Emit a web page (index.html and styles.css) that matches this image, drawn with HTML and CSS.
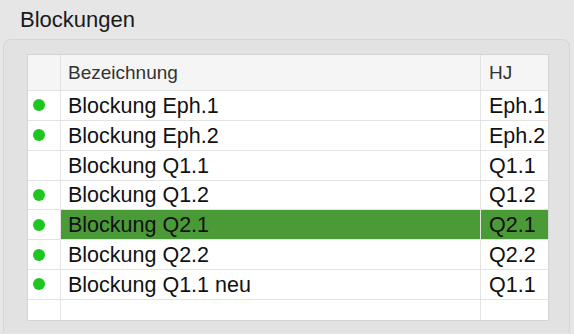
FILE: index.html
```html
<!DOCTYPE html>
<html>
<head>
<meta charset="utf-8">
<link rel="stylesheet" href="styles.css">
</head>
<body>
<div class="title">Blockungen</div>
<div class="panel">
  <div class="grid">
    <div class="cell head dotcol"></div>
    <div class="cell head name">Bezeichnung</div>
    <div class="cell head hj">HJ</div>

    <div class="cell dotcol"><span class="dot"></span></div>
    <div class="cell name">Blockung Eph.1</div>
    <div class="cell hj">Eph.1</div>

    <div class="cell dotcol"><span class="dot"></span></div>
    <div class="cell name">Blockung Eph.2</div>
    <div class="cell hj">Eph.2</div>

    <div class="cell dotcol"></div>
    <div class="cell name">Blockung Q1.1</div>
    <div class="cell hj">Q1.1</div>

    <div class="cell dotcol"><span class="dot"></span></div>
    <div class="cell name">Blockung Q1.2</div>
    <div class="cell hj">Q1.2</div>

    <div class="cell dotcol"><span class="dot"></span></div>
    <div class="cell name sel">Blockung Q2.1</div>
    <div class="cell hj sel">Q2.1</div>

    <div class="cell dotcol"><span class="dot"></span></div>
    <div class="cell name">Blockung Q2.2</div>
    <div class="cell hj">Q2.2</div>

    <div class="cell dotcol"><span class="dot"></span></div>
    <div class="cell name">Blockung Q1.1 neu</div>
    <div class="cell hj">Q1.1</div>

    <div class="cell filler dotcol"></div>
    <div class="cell filler name"></div>
    <div class="cell filler hj"></div>
  </div>
</div>
</body>
</html>
```

FILE: styles.css
```css
html, body {
  margin: 0;
  padding: 0;
  background: #e6e6e6;
  font-family: "Liberation Sans", Arial, sans-serif;
  color: #111;
  height: 334px;
  overflow: hidden;
}

.title {
  padding: 7px 0 0 20px;
  height: 32px;
  font-size: 22px;
  line-height: 26px;
  color: #1a1a1a;
}

.panel {
  margin: 0 4px 0 3px;
  height: 294px;
  background: #e2e2e2;
  border: 1px solid #d6d6d6;
  border-bottom: none;
  border-radius: 8px 8px 0 0;
  padding: 14px 20px 0 23px;
  box-sizing: border-box;
}

.grid {
  display: grid;
  grid-template-columns: 33px 1fr 68px;
  grid-template-rows: 36px repeat(7, 29.857px) 20px;
  background: #fff;
  border: 1px solid #d4d4d4;
  border-right: none;
  border-bottom: 1px solid #d4d4d4;
}

.cell {
  border-bottom: 1px solid #e3e3e3;
  border-right: 1px solid #e3e3e3;
  display: flex;
  align-items: center;
  font-size: 21.5px;
  padding-left: 7px;
  padding-top: 2px;
  box-sizing: border-box;
  white-space: nowrap;
}

.head {
  background: #f5f5f5;
  font-size: 19px;
  color: #333;
  padding-top: 0;
}

.dotcol {
  padding-left: 5px;
  padding-top: 0;
}

.hj {
  padding-left: 8px;
  border-right: 1px solid #d4d4d4;
}

.filler {
  border-bottom: none;
}

.dot {
  width: 12px;
  height: 12px;
  border-radius: 50%;
  background: #1fc61f;
}

.sel {
  background: #4b9a38;
  color: #111;
}
```
